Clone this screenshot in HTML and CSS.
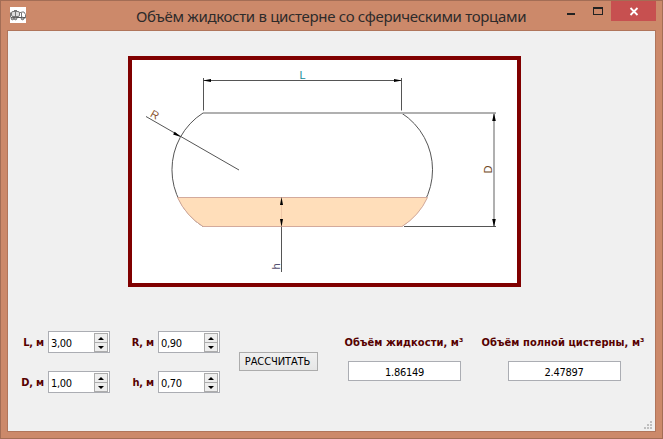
FILE: index.html
```html
<!DOCTYPE html>
<html lang="ru">
<head>
<meta charset="utf-8">
<title>Объём жидкости в цистерне со сферическими торцами</title>
<link rel="stylesheet" href="styles.css">
</head>
<body>
<div class="window">
  <header class="titlebar">
    <svg class="app-icon" width="16" height="16" viewBox="0 0 16 16">
      <rect width="16" height="16" fill="#fff"/>
      <g fill="none" stroke="#777">
        <rect x="1.500" y="4.500" width="8" height="5" rx="1.500" fill="#ddd"/>
        <path d="M4 3.500h3M5.500 3.500v6M.5 5.500v5M9.500 5.500h2v5M11.500 5h2.500l1.500 2.500v3.500h-4"/>
        <path d="M1 10.500h14" stroke="#555"/>
      </g>
      <g fill="#aaa" stroke="#555" stroke-width=".8"><circle cx="2.500" cy="11.500" r="1.300"/><circle cx="5.500" cy="11.500" r="1.300"/><circle cx="12.500" cy="11.500" r="1.300"/></g>
    </svg>
    <h1 class="title">Объём жидкости в цистерне со сферическими торцами</h1>
    <div class="controls">
      <svg width="90" height="20" viewBox="0 0 90 20" shape-rendering="crispEdges">
        <rect x="45" width="45" height="20" fill="#c75050"/>
        <rect x="1" y="12" width="8" height="2" fill="#222"/>
        <path d="M27 6h10v8H27zM28 8v5h8V8z" fill="#222" fill-rule="evenodd"/>
        <path d="M64.500 7l7 7M71.500 7l-7 7" stroke="#fff" stroke-width="1.800" shape-rendering="auto"/>
      </svg>
    </div>
  </header>
  <main class="client">
    <figure class="picture">
      <svg width="385" height="223" viewBox="132 60 385 223">
        <path d="M203 226.500A67.400 67.400 0 0 1 203 113M401.500 113A67.400 67.400 0 0 1 401.500 226.500" fill="none" stroke="#555"/>
        <path d="M203 113H496" stroke="#b0b0b0" stroke-width="2"/>
        <path d="M494 113V227" stroke="#b0b0b0" stroke-width="2"/>
        <path d="M177.500 197.500H427.500A67.400 67.400 0 0 1 402 226.500H203A67.400 67.400 0 0 1 177.500 197.500z" fill="#ffdeba" stroke="#d3aa9c"/>
        <path d="M404 226.500H496M203.500 78V110.500M401.500 78V110.500M203 80.500H402M281.500 227V272" stroke="#555" fill="none"/>
        <path d="M281.500 198V226" stroke="#efc8a8"/>
        <path d="M146 116.500L239 170" stroke="#555"/>
        <path d="M203 80.500l8-1.500v3zM402 80.500l-8-1.500v3zM494 113l-1.800 8h3.600zM494 227l-1.800-8h3.600zM281.500 197l-1.500 8h3zM281.500 227l-1.500-8h3zM181 137l-6.300-5.300-1.600 2.700z" fill="#000"/>
        <g class="dimension">
          <text class="dim-l" x="299.500" y="79">L</text>
          <text class="dim-r" transform="translate(149.500 116) rotate(30)">R</text>
          <text class="dim-d" transform="translate(492 173.500) rotate(-90)">D</text>
          <text class="dim-h" transform="translate(280 269.500) rotate(-90)">h</text>
        </g>
      </svg>
    </figure>
    <section class="form">
      <div class="inputs">
        <label>L, м</label><div class="spin"><span>3,00</span><div class="steps"><i class="up"></i><i class="down"></i></div></div>
        <label>R, м</label><div class="spin"><span>0,90</span><div class="steps"><i class="up"></i><i class="down"></i></div></div>
        <label>D, м</label><div class="spin"><span>1,00</span><div class="steps"><i class="up"></i><i class="down"></i></div></div>
        <label>h, м</label><div class="spin"><span>0,70</span><div class="steps"><i class="up"></i><i class="down"></i></div></div>
      </div>
      <button class="calculate">РАССЧИТАТЬ</button>
      <div class="result liquid"><h2>Объём жидкости, м³</h2><output>1.86149</output></div>
      <div class="result full"><h2>Объём полной цистерны, м³</h2><output>2.47897</output></div>
    </section>
    <svg class="grip" width="8" height="8" viewBox="0 0 8 8" fill="#bfbfbf"><path d="M6 0h2v2H6zM3 3h2v2H3zM6 3h2v2H6zM0 6h2v2H0zM3 6h2v2H3zM6 6h2v2H6z"/></svg>
  </main>
</div>
</body>
</html>
```
FILE: styles.css
```css
* { box-sizing: border-box; }
body {
  margin: 0;
  font: 11px/14px "DejaVu Sans Condensed", "DejaVu Sans", sans-serif;
  font-stretch: condensed;
  color: #000;
}
.window {
  width: 663px;
  height: 439px;
  padding: 0 6px 6px;
  display: flex;
  flex-direction: column;
  background: #cc896a;
  border: 1px solid #a36d55;
}
.titlebar { height: 29px; display: flex; align-items: flex-start; }
.app-icon { margin: 6px 0 0 3px; flex: none; }
.title {
  margin: 4px 0 0 110px;
  width: 422px;
  font: 15px/22px "Noto Sans", sans-serif;
  letter-spacing: -0.32px;
  color: #2d2b2a;
  white-space: nowrap;
}
.controls { margin-left: auto; height: 20px; }
.controls svg { display: block; }
.client {
  position: relative;
  width: 649px;
  height: 402px;
  border: 1px solid #b0755b;
  background: #f0f0f0;
}
.picture {
  width: 393px;
  height: 231px;
  margin: 25px 0 0 120px;
  border: 4px solid #800000;
  background: #fff;
}
.picture svg { display: block; }
.dimension { font: 11px "Liberation Sans", sans-serif; }
.dim-l { fill: #168b9b; }
.dim-r { fill: #8a5230; }
.dim-d { fill: #704825; }
.dim-h { fill: #555070; }
.form { display: flex; align-items: flex-start; margin-top: 44px; }
.inputs {
  display: grid;
  grid-template-columns: 40px 62px 48px 62px;
  grid-template-rows: 22px 22px;
  row-gap: 18px;
}
label, h2 { margin: 0; color: #560000; font-size: 11px; font-weight: bold; line-height: 24px; white-space: nowrap; }
h2 { height: 22px; letter-spacing: 0.08px; }
label { height: 22px; text-align: right; padding-right: 4px; letter-spacing: -0.2px; }
.spin {
  display: flex;
  justify-content: space-between;
  padding: 1px;
  border: 1px solid #abadb3;
  background: #fff;
}
.spin span { padding: 4px 0 0 1px; letter-spacing: -0.3px; }
.steps { width: 14px; display: flex; flex-direction: column; margin: 0 0 -1px; }
.steps i {
  height: 10px;
  border: 1px solid #acacac;
  background: #eee;
  display: flex;
  align-items: center;
  justify-content: center;
}
.steps i + i { margin-top: -1px; }
.steps i::after { content: ""; border: solid transparent; border-width: 0 3px; }
.steps .up::after { border-bottom: 3px solid #000; }
.steps .down::after { border-top: 3px solid #000; }
.calculate {
  width: 79px;
  height: 19px;
  margin: 21px 0 0 19px;
  padding: 1px 2px 0 0;
  border: 1px solid #acacac;
  background: linear-gradient(#f0f0f0, #e6e6e6);
  font: inherit;
  color: #000;
  letter-spacing: -0.1px;
}
.result { display: flex; flex-direction: column; align-items: center; }
.liquid { margin-left: 25px; width: 122px; }
.liquid output { margin-left: 1px; }
.full { margin-left: 15px; width: 166px; }
.full output { margin-left: 2px; }
output {
  width: 113px;
  height: 20px;
  margin-top: 8px;
  border: 1px solid #abadb3;
  background: #fff;
  text-align: center;
  line-height: 21px;
  letter-spacing: -0.3px;
}
.grip { position: absolute; right: 3px; bottom: 2px; }
```
